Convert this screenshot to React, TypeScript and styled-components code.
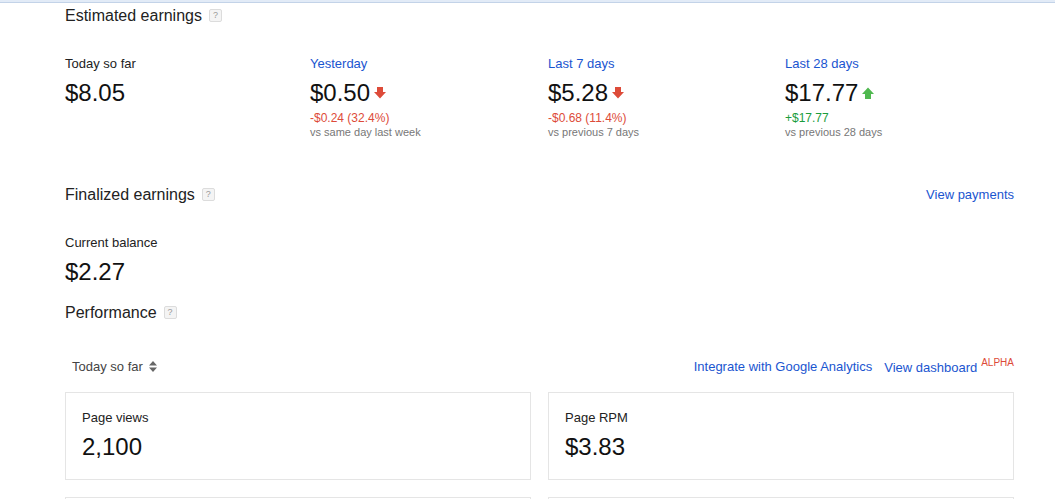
import styled, { createGlobalStyle } from 'styled-components';

const GlobalStyle = createGlobalStyle`
  body {
    margin: 0;
    background: #fff;
    font-family: 'Liberation Sans', Arial, sans-serif;
    color: #222;
  }
`;

const TopStrip = styled.div`
  height: 2px;
  background: #e2ebf7;
  border-bottom: 1px solid #c3d3e8;
`;

const Main = styled.main`
  padding: 3px 41px 0 65px;
`;

const SectionHeader = styled.div<{ $top?: number }>`
  display: flex;
  align-items: center;
  justify-content: space-between;
  margin-top: ${({ $top }) => $top ?? 0}px;
`;

const Title = styled.h2`
  display: flex;
  align-items: center;
  gap: 7px;
  margin: 0;
  font-size: 16px;
  line-height: 19px;
  font-weight: normal;
  color: #222;
`;

const Help = styled.span`
  display: inline-flex;
  align-items: center;
  justify-content: center;
  width: 11px;
  height: 11px;
  border: 1px solid #dcdcdc;
  border-radius: 2px;
  background: #f4f4f4;
  color: #9a9a9a;
  font-size: 9px;
  line-height: 1;
`;

const Link = styled.a`
  color: #1a55d0;
  font-size: 13px;
  line-height: 15px;
  text-decoration: none;
  cursor: pointer;
`;

const StatsGrid = styled.div`
  display: grid;
  grid-template-columns: 245px 238px 237px 1fr;
  margin-top: 31px;
`;

const Stat = styled.div``;

const StatLabel = styled.div<{ $link?: boolean }>`
  font-size: 13px;
  line-height: 15px;
  color: ${({ $link }) => ($link ? '#1a55d0' : '#222')};
`;

const AmountRow = styled.div`
  display: flex;
  align-items: center;
  gap: 4px;
  margin-top: 8px;
`;

const Amount = styled.div`
  font-size: 24px;
  line-height: 28px;
  color: #111;
`;

const Change = styled.div<{ $up: boolean }>`
  margin-top: 4px;
  font-size: 12px;
  line-height: 14px;
  color: ${({ $up }) => ($up ? '#1b9c3c' : '#dd4b39')};
`;

const Compare = styled.div`
  margin-top: 1px;
  font-size: 11px;
  line-height: 13px;
  color: #777;
`;

const Balance = styled.div`
  margin-top: 31px;
`;

const Toolbar = styled.div`
  display: flex;
  align-items: center;
  justify-content: space-between;
  margin-top: 35px;
`;

const RangeSelect = styled.button`
  display: flex;
  align-items: center;
  gap: 6px;
  padding: 0 0 0 7px;
  border: none;
  background: none;
  font-family: inherit;
  font-size: 13px;
  line-height: 15px;
  color: #444;
`;

const LinkGroup = styled.div`
  display: flex;
  align-items: center;
  gap: 12px;
`;

const Alpha = styled.sup`
  margin-left: 4px;
  font-size: 10px;
  color: #dd4b39;
`;

const CardGrid = styled.div`
  display: grid;
  grid-template-columns: 1fr 1fr;
  column-gap: 17px;
  row-gap: 17px;
  margin-top: 16px;
`;

const Card = styled.div`
  height: 88px;
  box-sizing: border-box;
  border: 1px solid #e5e5e5;
  padding: 17px 16px 0;
`;

const CardLabel = styled.div`
  font-size: 13px;
  line-height: 15px;
  color: #222;
`;

const CardValue = styled.div`
  margin-top: 8px;
  font-size: 24px;
  line-height: 28px;
  color: #111;
`;

const Trend = ({ up }: { up: boolean }) =>
  up ? (
    <svg width="12" height="12" viewBox="0 0 12 12">
      <path d="M6 0.5l6 6.5H9v5H3V7H0z" fill="#4fb84f" />
    </svg>
  ) : (
    <svg width="12" height="12" viewBox="0 0 12 12">
      <path d="M3 0h6v5h3l-6 6.5L0 5h3z" fill="#dd4b39" />
    </svg>
  );

const SortIcon = () => (
  <svg width="8" height="11" viewBox="0 0 8 11">
    <path d="M4 0l4 4.5H0z M4 11L0 6.5h8z" fill="#666" />
  </svg>
);

type StatData = {
  label: string;
  link?: boolean;
  amount: string;
  change?: string;
  up?: boolean;
  compare?: string;
};

const stats: StatData[] = [
  { label: 'Today so far', amount: '$8.05' },
  {
    label: 'Yesterday',
    link: true,
    amount: '$0.50',
    change: '-$0.24 (32.4%)',
    up: false,
    compare: 'vs same day last week',
  },
  {
    label: 'Last 7 days',
    link: true,
    amount: '$5.28',
    change: '-$0.68 (11.4%)',
    up: false,
    compare: 'vs previous 7 days',
  },
  {
    label: 'Last 28 days',
    link: true,
    amount: '$17.77',
    change: '+$17.77',
    up: true,
    compare: 'vs previous 28 days',
  },
];

const cards = [
  { label: 'Page views', value: '2,100' },
  { label: 'Page RPM', value: '$3.83' },
  { label: '', value: '' },
  { label: '', value: '' },
];

const App = () => {
  return (
    <>
      <GlobalStyle />
      <TopStrip />
      <Main>
        <SectionHeader>
          <Title>
            Estimated earnings <Help>?</Help>
          </Title>
        </SectionHeader>

        <StatsGrid>
          {stats.map((s) => (
            <Stat key={s.label}>
              <StatLabel $link={s.link}>{s.label}</StatLabel>
              <AmountRow>
                <Amount>{s.amount}</Amount>
                {s.change && <Trend up={!!s.up} />}
              </AmountRow>
              {s.change && <Change $up={!!s.up}>{s.change}</Change>}
              {s.compare && <Compare>{s.compare}</Compare>}
            </Stat>
          ))}
        </StatsGrid>

        <SectionHeader $top={46}>
          <Title>
            Finalized earnings <Help>?</Help>
          </Title>
          <Link>View payments</Link>
        </SectionHeader>

        <Balance>
          <StatLabel>Current balance</StatLabel>
          <AmountRow>
            <Amount>$2.27</Amount>
          </AmountRow>
        </Balance>

        <SectionHeader $top={17}>
          <Title>
            Performance <Help>?</Help>
          </Title>
        </SectionHeader>

        <Toolbar>
          <RangeSelect>
            Today so far <SortIcon />
          </RangeSelect>
          <LinkGroup>
            <Link>Integrate with Google Analytics</Link>
            <span>
              <Link>View dashboard</Link>
              <Alpha>ALPHA</Alpha>
            </span>
          </LinkGroup>
        </Toolbar>

        <CardGrid>
          {cards.map((c, i) => (
            <Card key={i}>
              <CardLabel>{c.label}</CardLabel>
              <CardValue>{c.value}</CardValue>
            </Card>
          ))}
        </CardGrid>
      </Main>
    </>
  );
};

export default App;
